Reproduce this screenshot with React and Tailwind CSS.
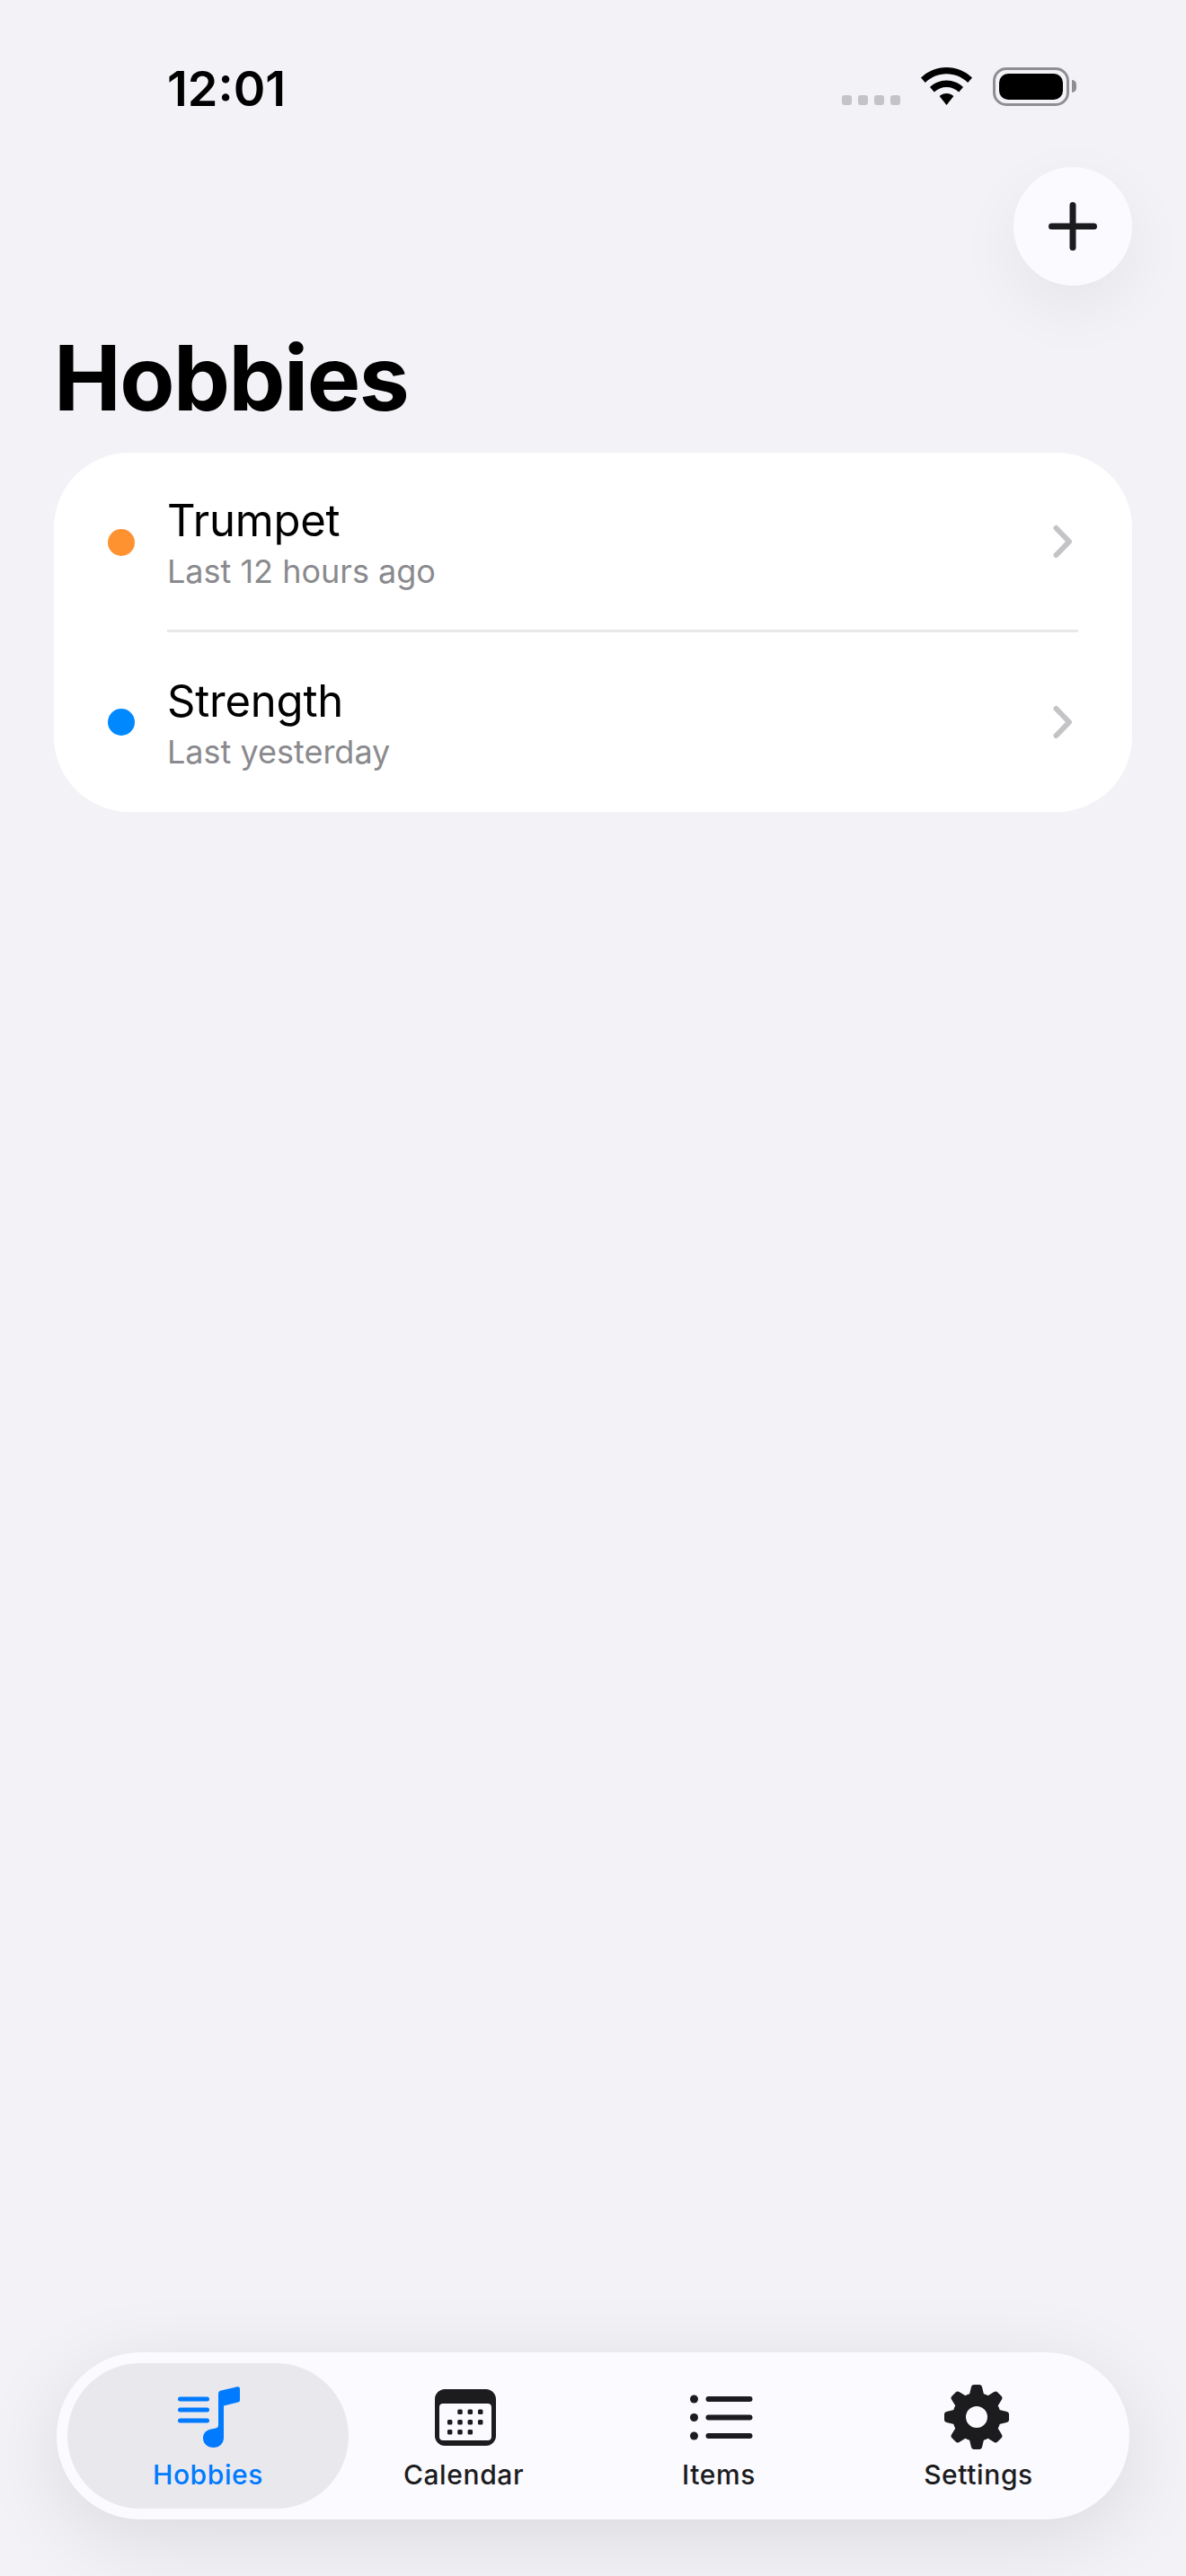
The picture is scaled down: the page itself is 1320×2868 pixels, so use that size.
import React from 'react';

const font = "font-['Inter','Liberation_Sans',sans-serif]";

const StatusBar = () => (
    <div className="flex items-start justify-between h-[186px] pl-[186px] pr-[122px]">
        <span className="mt-[69px] text-[54px] leading-[60px] font-semibold text-black">12:01</span>
        <div className="flex items-start mt-[75px]">
            <div className="flex gap-[7px] mt-[31px] mr-[23px]">
                {[0, 1, 2, 3].map((i) => (
                    <div key={i} className="w-[11px] h-[11px] rounded-[3px] bg-[#c4c4c8]" />
                ))}
            </div>
            <svg width="57" height="42" viewBox="0 0 57 42" className="mr-[23px]">
                <path d="M28.5 0C17.5 0 7.7 4.2 0 11.5L4.8 17C11 11 19.2 7.3 28.5 7.3S46 11 52.2 17L57 11.5C49.3 4.2 39.5 0 28.5 0Z" fill="#000" />
                <path d="M28.5 14.5C21.5 14.5 15 17.3 10 22L14.8 27.5C18.5 24 23.3 22 28.5 22S38.5 24 42.2 27.5L47 22C42 17.3 35.5 14.5 28.5 14.5Z" fill="#000" />
                <path d="M28.5 29C25.5 29 22.8 30.1 20.6 32L28.5 42L36.4 32C34.2 30.1 31.5 29 28.5 29Z" fill="#000" />
            </svg>
            <div className="w-[85px] h-[43px] rounded-[15px] border-[3px] border-[#8e8e93] p-[4px]">
                <div className="w-full h-full rounded-[10px] bg-black" />
            </div>
            <div className="w-[5px] h-[14px] mt-[14px] ml-[3px] rounded-r-full bg-[#8e8e93]" />
        </div>
    </div>
);

const PlusButton = () => (
    <div className="flex justify-end pr-[60px]">
        <button className="flex items-center justify-center w-[132px] h-[132px] rounded-full bg-[#fafaff] shadow-[0_24px_72px_rgba(0,0,0,0.06)]">
            <svg width="54" height="54" viewBox="0 0 54 54">
                <path d="M27 3.5V50.5M3.5 27H50.5" stroke="#1c1c1e" strokeWidth="7" strokeLinecap="round" />
            </svg>
        </button>
    </div>
);

const Chevron = () => (
    <svg width="22" height="38" viewBox="0 0 22 38" className="shrink-0">
        <path d="M3.5 4L18 19L3.5 34" fill="none" stroke="#c4c4c7" strokeWidth="6" strokeLinecap="round" strokeLinejoin="round" />
    </svg>
);

const Row = ({ dot, name, sub, last }) => (
    <div className="flex h-[200px] pl-[60px]">
        <div className={`w-[30px] h-[30px] mt-[85px] rounded-full shrink-0 ${dot}`} />
        <div className="flex flex-col flex-1 ml-[36px] mr-[60px]">
            <div className="flex flex-1 items-center justify-between pr-[6px]">
                <div className="flex flex-col pt-[2px]">
                    <span className="text-[49px] leading-[62px] tracking-[-0.2px] text-black">{name}</span>
                    <span className="mt-[2px] text-[36px] leading-[46px] text-[#8a8a8e]">{sub}</span>
                </div>
                <Chevron />
            </div>
            {!last && <div className="h-[3px] bg-[#e8e8ea]" />}
        </div>
    </div>
);

const MusicIcon = () => (
    <svg width="70" height="68" viewBox="0 0 70 68">
        <path d="M2.5 14H32.5M2.5 26H32.5M2.5 38H32.5" stroke="#007aff" strokeWidth="5" strokeLinecap="round" />
        <path d="M45 8C45 6 46 5 48 4.5L66 0.3C68 0 69 1 69 3V15C69 16.5 68.3 17.3 67 17.6L51 21.5V57C51 63.5 46 68 39.5 68C33 68 28 63.5 28 57.5C28 52 31.5 48.5 37 47.5L42 46.5C44 46 45 45 45 43Z" fill="#007aff" />
    </svg>
);

const CalendarIcon = () => {
    const cols = [16.7, 28, 39.3, 50.7];
    const dots = [
        [cols[1], 25.3], [cols[2], 25.3], [cols[3], 25.3],
        [cols[0], 36.7], [cols[1], 36.7], [cols[2], 36.7], [cols[3], 36.7],
        [cols[0], 47.7], [cols[1], 47.7], [cols[2], 47.7],
    ];
    return (
        <svg width="68" height="63" viewBox="0 0 68 63">
            <path fillRule="evenodd" d="M11 0H57C63 0 68 5 68 11V52C68 58 63 63 57 63H11C5 63 0 58 0 52V11C0 5 5 0 11 0ZM9 16C6.5 16 5 17.5 5 20V53C5 55.5 6.5 57 9 57H59C61.5 57 63 55.5 63 53V20C63 17.5 61.5 16 59 16Z" fill="#1c1c1e" />
            {dots.map(([x, y]) => (
                <rect key={`${x}-${y}`} x={x - 2.75} y={y - 2.75} width="5.5" height="5.5" rx="1.5" fill="#1c1c1e" />
            ))}
        </svg>
    );
};

const ItemsIcon = () => (
    <svg width="70" height="51" viewBox="0 0 70 51">
        {[5, 25.5, 46].map((y) => (
            <g key={y}>
                <circle cx="4.5" cy={y} r="4.5" fill="#1c1c1e" />
                <rect x="17.5" y={y - 3} width="52" height="6" rx="3" fill="#1c1c1e" />
            </g>
        ))}
    </svg>
);

const GearIcon = () => {
    const teeth = [0, 45, 90, 135, 180, 225, 270, 315];
    return (
        <svg width="74" height="74" viewBox="0 0 74 74">
            <path
                fillRule="evenodd"
                d="M37 10A27 27 0 1 0 37 64A27 27 0 1 0 37 10ZM37 25A12 12 0 1 1 37 49A12 12 0 1 1 37 25Z"
                fill="#1c1c1e"
            />
            {teeth.map((a) => (
                <path key={a} d="M27.5 18L31 3.5C31.3 2 32.5 1 34 1H40C41.5 1 42.7 2 43 3.5L46.5 18Z" fill="#1c1c1e" transform={`rotate(${a} 37 37)`} />
            ))}
        </svg>
    );
};

const tabs = [
    { label: 'Hobbies', icon: <MusicIcon />, width: 'w-[313px]', nudge: 'ml-[2px]', active: true },
    { label: 'Calendar', icon: <CalendarIcon />, width: 'w-[256px]', nudge: 'ml-[4px]' },
    { label: 'Items', icon: <ItemsIcon />, width: 'w-[312px]', nudge: 'ml-[6px]' },
    { label: 'Settings', icon: <GearIcon />, width: 'w-[266px]', nudge: 'mr-[4px]' },
];

const TabBar = () => (
    <div className="mt-auto mb-[63px] mx-[63px] h-[186px] p-[12px] rounded-full bg-[#fafaff] shadow-[0_20px_90px_rgba(0,0,0,0.1)] flex">
        {tabs.map((t) => (
            <div
                key={t.label}
                className={`${t.width} flex flex-col items-center rounded-full ${t.active ? 'bg-[#e8e8ed] text-[#007aff]' : 'text-[#1c1c1e]'}`}
            >
                <div className={`h-[80px] mt-[20px] flex items-center justify-center ${t.nudge}`}>{t.icon}</div>
                <span className="mt-[6px] text-[30px] leading-[36px] font-medium tracking-[0.6px]">{t.label}</span>
            </div>
        ))}
    </div>
);

export default function App() {
    return (
        <div className={`flex flex-col w-[1320px] h-[2868px] overflow-hidden bg-[#f2f2f7] ${font}`}>
            <StatusBar />
            <PlusButton />
            <h1 className="mt-[41px] ml-[60px] text-[100px] leading-[124px] font-bold text-black tracking-[-1.5px]">Hobbies</h1>
            <div className="mx-[60px] mt-[21px] rounded-[84px] bg-white">
                <Row dot="bg-[#ff9230]" name="Trumpet" sub="Last 12 hours ago" />
                <Row dot="bg-[#0088ff]" name="Strength" sub="Last yesterday" last />
            </div>
            <TabBar />
        </div>
    );
}
